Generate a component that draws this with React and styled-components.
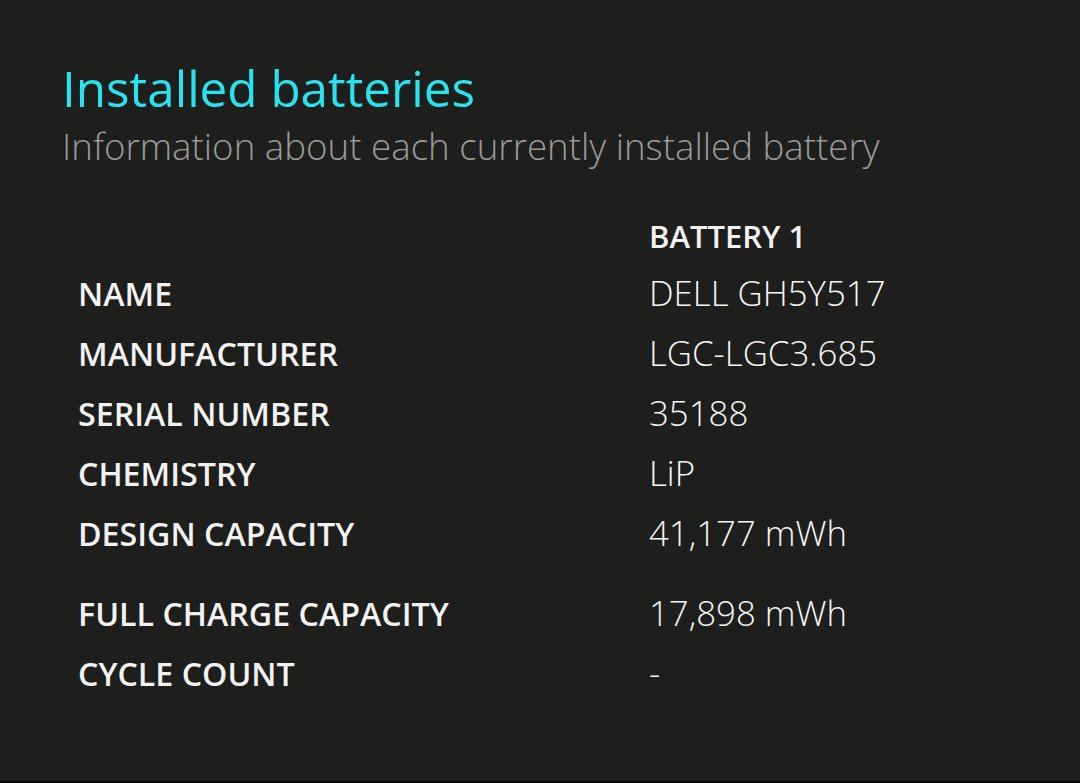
import React from "react";
import styled, { createGlobalStyle } from "styled-components";

const Global = createGlobalStyle`
  html, body { margin: 0; padding: 0; background: #1e1e1c; }
  body { font-family: "Open Sans", "Noto Sans", sans-serif; }
`;

const Page = styled.div`
  width: 1080px;
  height: 783px;
  box-sizing: border-box;
  background: #1e1e1c;
  border-bottom: 2px solid #050505;
  padding: 58px 0 0 62px;
  overflow: hidden;
`;

const Title = styled.h1`
  margin: 0;
  font-size: 49.4px;
  line-height: 60px;
  font-weight: 400;
  color: #27e4ee;
`;

const Subtitle = styled.p`
  margin: 6px 0 0;
  font-size: 36.7px;
  line-height: 44px;
  font-weight: 300;
  color: #9a9a9a;
`;

const Table = styled.div`
  margin-top: 38px;
  padding-left: 16px;
  display: flex;
  flex-direction: column;
`;

const Row = styled.div`
  display: grid;
  grid-template-columns: 571px 1fr;
  align-items: baseline;
  height: ${(p) => (p.$head ? "57px" : "60px")};
  margin-top: ${(p) => (p.$gap ? "20px" : "0")};
`;

const Label = styled.div`
  font-size: 32.2px;
  line-height: 60px;
  font-weight: 600;
  color: #f2f2f2;
`;

const Value = styled.div`
  font-size: 34.8px;
  line-height: 60px;
  font-weight: 300;
  color: #f5f5f5;
`;

const Head = styled.div`
  font-size: 31px;
  line-height: 60px;
  font-weight: 600;
  color: #f2f2f2;
`;

const rows = [
  ["NAME", "DELL GH5Y517"],
  ["MANUFACTURER", "LGC-LGC3.685"],
  ["SERIAL NUMBER", "35188"],
  ["CHEMISTRY", "LiP"],
  ["DESIGN CAPACITY", "41,177 mWh"],
  ["FULL CHARGE CAPACITY", "17,898 mWh", true],
  ["CYCLE COUNT", "-"],
];

export default function App() {
  return (
    <>
      <Global />
      <Page>
        <Title>Installed batteries</Title>
        <Subtitle>Information about each currently installed battery</Subtitle>
        <Table>
          <Row $head>
            <Label />
            <Head>BATTERY 1</Head>
          </Row>
          {rows.map(([l, v, g]) => (
            <Row key={l} $gap={g}>
              <Label>{l}</Label>
              <Value>{v}</Value>
            </Row>
          ))}
        </Table>
      </Page>
    </>
  );
}
